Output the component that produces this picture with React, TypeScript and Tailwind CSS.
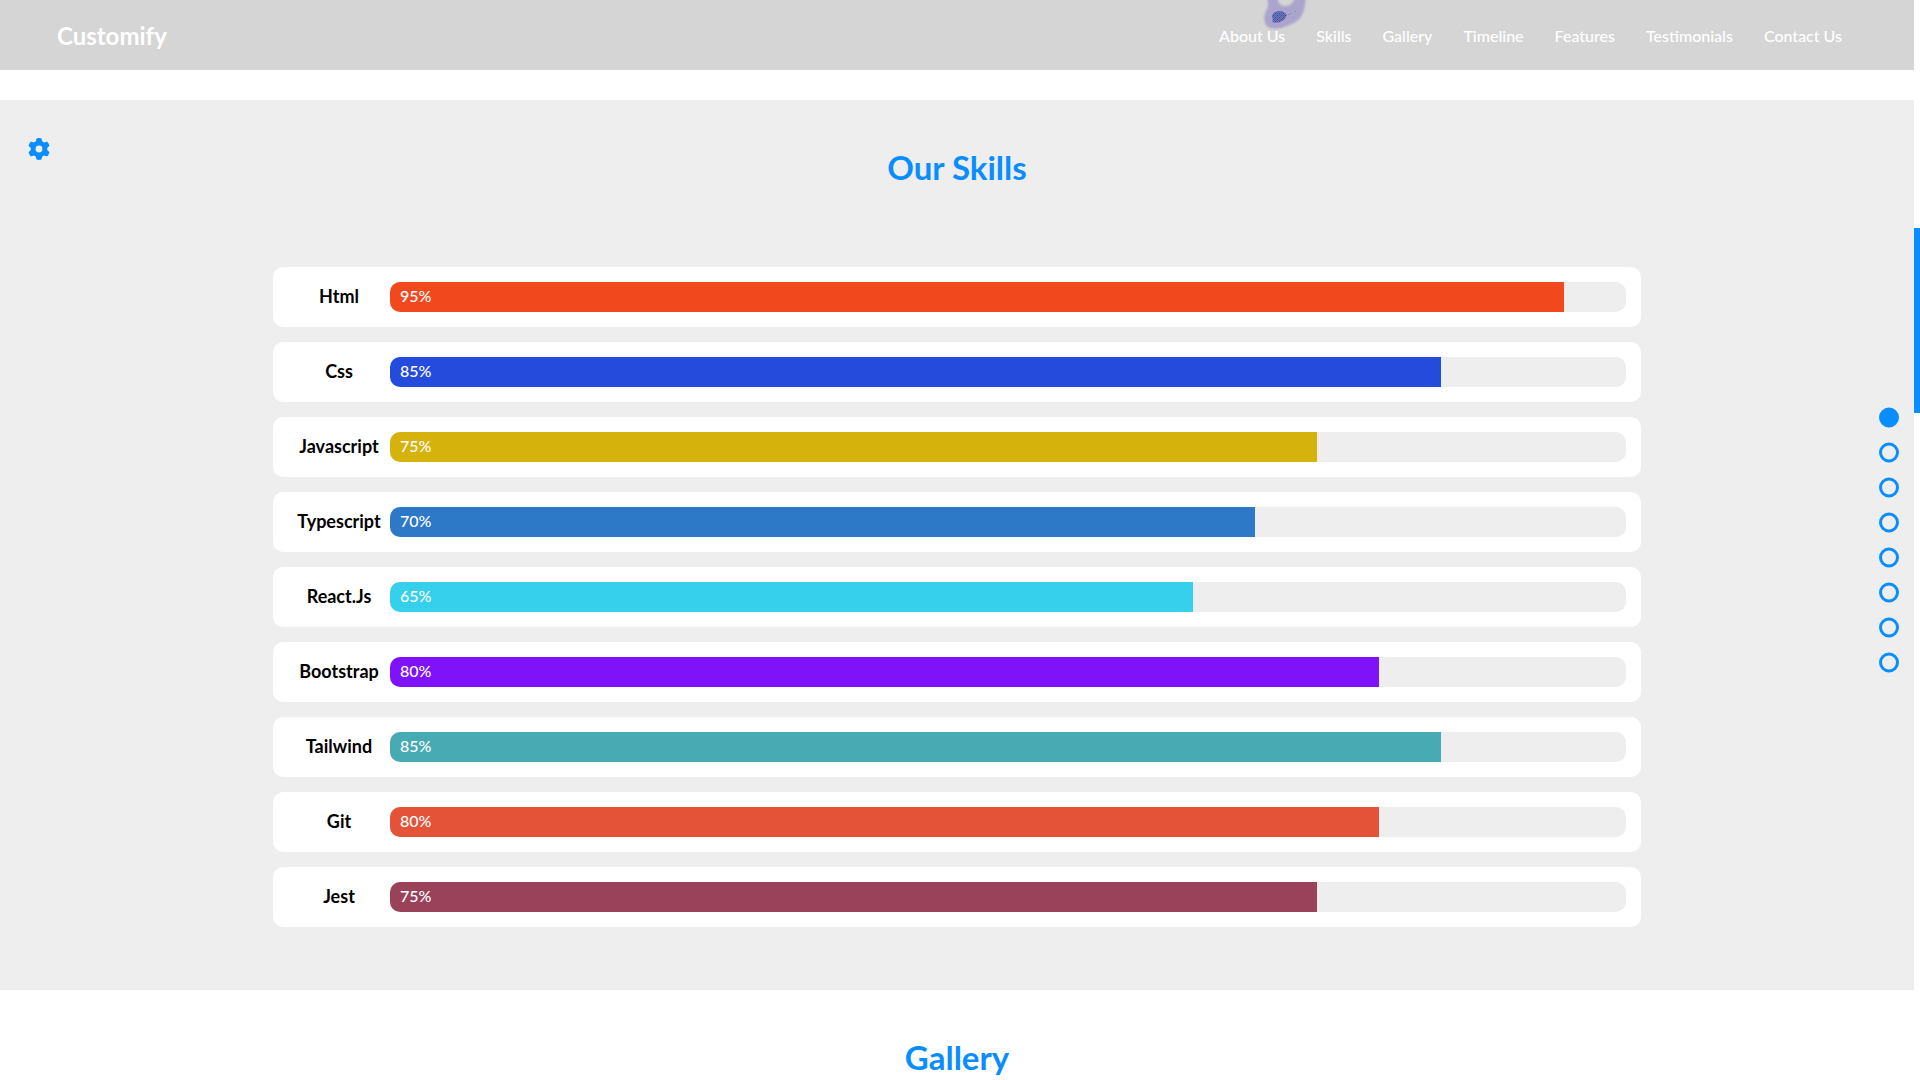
import { useState } from "react";
import { FaGear } from "react-icons/fa6";

const links = ["About Us", "Skills", "Gallery", "Timeline", "Features", "Testimonials", "Contact Us"];

const skills = [
  { name: "Html", value: 95, color: "bg-[#f1481e]" },
  { name: "Css", value: 85, color: "bg-[#254bdd]" },
  { name: "Javascript", value: 75, color: "bg-[#d6b20d]" },
  { name: "Typescript", value: 70, color: "bg-[#2d79c7]" },
  { name: "React.Js", value: 65, color: "bg-[#36cfec]" },
  { name: "Bootstrap", value: 80, color: "bg-[#8012fa]" },
  { name: "Tailwind", value: 85, color: "bg-[#48abb3]" },
  { name: "Git", value: 80, color: "bg-[#e45237]" },
  { name: "Jest", value: 75, color: "bg-[#99425a]" },
];

const sections = ["Home", "Skills", "Gallery", "Timeline", "Features", "Testimonials", "Contact", "Footer"];

function CursorTrail() {
  return (
    <svg className="absolute top-0 left-[1260px]" width="52" height="34" viewBox="0 0 52 34" fill="none" aria-hidden="true">
      <defs>
        <filter id="trail-soft" x="-20%" y="-20%" width="140%" height="140%">
          <feGaussianBlur stdDeviation="1" />
        </filter>
        <pattern id="trail-dots" width="4" height="4" patternUnits="userSpaceOnUse">
          <rect width="4" height="4" fill="#7a76b4" />
          <rect width="1" height="1" fill="#1a73d9" />
          <rect x="2" y="2" width="1" height="1" fill="#1a73d9" />
          <rect x="1" y="1" width="1" height="1" fill="#1a73d9" />
          <rect x="3" y="3" width="1" height="1" fill="#1a73d9" />
          <rect x="2" y="0" width="1" height="1" fill="#c23a5c" />
          <rect x="0" y="2" width="1" height="1" fill="#c23a5c" />
          <rect x="3" y="1" width="1" height="1" fill="#2c3f98" />
          <rect x="1" y="3" width="1" height="1" fill="#2c3f98" />
        </pattern>
      </defs>
      <path d="M7 -8 L8 7 C4 13 3 20 6 25 C9 30 18 29 24 27 C33 24 38 22 42 15 C45 9 46 0 46 -8 L35 -8 L34 0 C32 4 29 6 25 6 C20 6 17 3 17 -8 Z" fill="#aba5cd" filter="url(#trail-soft)" />
      <path d="M12 17 C12 13 16 11 20 11 C24 11 26 14 27 15 C25 19 23 21 20 22 C17 23 14 23 12 22 C13 20 13 19 12 17 Z" fill="url(#trail-dots)" />
      <path d="M27 15h2v-1h2v-1h-1v1h-2v1h-1z M35 11h1v1h-1z" fill="#4a9fc0" />
    </svg>
  );
}

export default function App() {
  const [active, setActive] = useState(0);
  return (
    <div className="flex h-screen overflow-hidden bg-white font-['Lato',sans-serif] text-base text-black">
      <div className="relative flex min-w-0 flex-1 flex-col">
        <header className="relative h-[70px] shrink-0 bg-[#d5d5d5] px-[57px] text-white">
          <CursorTrail />
          <div className="relative flex h-full items-center justify-between pt-[2px]">
            <a href="#home" className="text-2xl font-bold">Customify</a>
            <nav className="flex gap-px">
              {links.map((l) => (
                <a key={l} href="#" className="px-[15px] font-medium">{l}</a>
              ))}
            </nav>
          </div>
        </header>

        <main className="mt-[30px]">
          <section className="bg-[#eeeeee] pt-[43px] pb-[63px]">
            <h2 className="text-center text-[33px] leading-12 font-bold text-[#0a8dff]">Our Skills</h2>
            <ul className="mx-auto mt-[76px] flex max-w-[1400px] flex-col gap-[15px] px-4">
              {skills.map((s) => (
                <li key={s.name} className="flex items-start rounded-[10px] bg-white p-[15px]">
                  <span className="w-[102px] text-center text-lg leading-7 font-bold">{s.name}</span>
                  <div className="h-[30px] flex-1 overflow-hidden rounded-[10px] bg-[#eeeeee]">
                    <div className={`h-full px-[10px] leading-7 font-medium text-white ${s.color}`} style={{ width: `${s.value}%` }}>
                      {s.value}%
                    </div>
                  </div>
                </li>
              ))}
            </ul>
          </section>
          <section className="pt-[43px]">
            <h2 className="text-center text-[33px] leading-12 font-bold text-[#0a8dff]">Gallery</h2>
          </section>
        </main>

        <button type="button" aria-label="Settings" className="absolute top-[138px] left-7 text-[22px] text-[#0a8dff]">
          <FaGear />
        </button>

        <div className="absolute top-1/2 right-[15px] flex -translate-y-1/2 flex-col gap-[15px]">
          {sections.map((s, i) => (
            <button
              key={s}
              type="button"
              aria-label={s}
              onClick={() => setActive(i)}
              className={`size-5 rounded-full border-3 border-[#0a8dff] ${i === active ? "bg-[#0a8dff]" : ""}`}
            />
          ))}
        </div>
      </div>
      <div className="w-[6px] shrink-0 bg-white pt-[228px]">
        <div className="h-[185px] bg-[#0a8dff]" />
      </div>
    </div>
  );
}
